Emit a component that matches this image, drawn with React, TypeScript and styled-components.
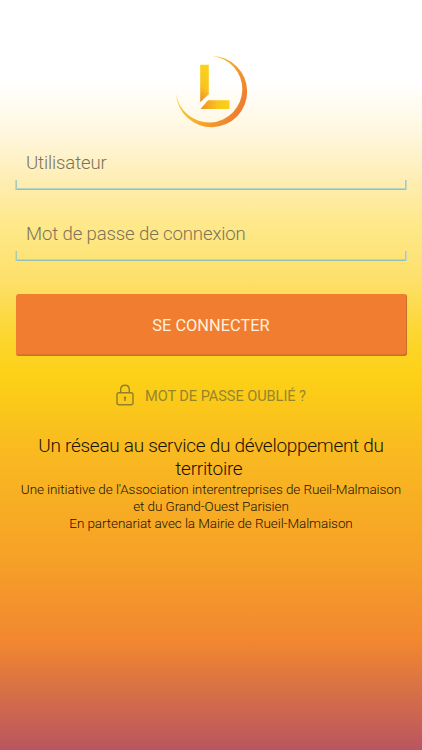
import React from "react";
import styled, { createGlobalStyle } from "styled-components";

const GlobalStyle = createGlobalStyle`
  *, *::before, *::after { box-sizing: border-box; }
  html, body { margin: 0; padding: 0; }
  body { font-family: Roboto, "Liberation Sans", sans-serif; }
`;

const Screen = styled.main`
  display: flex;
  flex-direction: column;
  align-items: stretch;
  width: 100%;
  height: 750px;
  padding: 52px 15px 0 16px;
  overflow: hidden;
  background: linear-gradient(
    180deg,
    #ffffff 0,
    #ffffff 82px,
    #fff6da 138px,
    #feedb2 182px,
    #fee88a 225px,
    #fde06a 280px,
    #fcd630 335px,
    #fcd116 376px,
    #f9ba20 450px,
    #f6a326 550px,
    #f28730 642px,
    #dc7442 682px,
    #b95560 750px
  );
`;

const Logo = styled.svg`
  display: block;
  width: 80px;
  height: 80px;
  margin-left: 155px;
`;

const Form = styled.form`
  display: flex;
  flex-direction: column;
  margin: 11px 0 0;
`;

const Field = styled.label`
  display: block;
  height: 47px;
  margin: 0 0 24px -1px;
  background:
    linear-gradient(90deg, #c3dac2 50%, #a3ccc0 50%) left bottom / 2px 10px no-repeat,
    linear-gradient(90deg, #a3ccc0 50%, #c3dac2 50%) right bottom / 2px 10px no-repeat,
    linear-gradient(#b4d6c6 50%, #90c2b8 50%) left bottom / 100% 2px no-repeat;
`;

const Input = styled.input`
  display: block;
  width: 100%;
  height: 40px;
  padding: 0 11px;
  border: 0;
  outline: 0;
  background: transparent;
  font: 300 18.6px Roboto, sans-serif;
  letter-spacing: -0.14px;
  color: #333;
  &::placeholder { color: #7d735a; opacity: 1; }
`;

const SubmitButton = styled.button`
  height: 62px;
  margin: 9px 0 0;
  padding: 0 1px 0 0;
  border: 0;
  border-radius: 3px;
  background: #f17e30;
  box-shadow: inset -1px -1.5px 0 #cb6f22;
  color: #fff0de;
  font: 400 16.4px Roboto, sans-serif;
`;

const ForgotLink = styled.a`
  display: flex;
  align-items: center;
  height: 24px;
  margin: 28px 0 0 99px;
  gap: 10px;
  color: #96862b;
  font-size: 14.6px;
  font-weight: 400;
  letter-spacing: -0.07px;
  white-space: nowrap;
`;

const LockIcon = styled.svg`
  display: block;
  flex: none;
  width: 20px;
  height: 24px;
  margin-top: -2px;
`;

const About = styled.section`
  margin: 27px 0 0 -1px;
  text-align: center;
  color: #1c1302;
  font-weight: 300;
  white-space: nowrap;
`;

const Headline = styled.h1`
  margin: 0 0 1px;
  font-size: 19px;
  line-height: 22.5px;
  font-weight: 300;
  letter-spacing: -0.28px;
`;

const Note = styled.p`
  margin: 0;
  font-size: 13.5px;
  line-height: 17.2px;
  letter-spacing: -0.08px;
`;

export default function App() {
  return (
    <>
      <GlobalStyle />
      <Screen>
        <Logo viewBox="0 0 80 80" aria-label="Logo">
          <defs>
            <linearGradient id="ring" x1="0" y1="0.3" x2="0.9" y2="0.75">
              <stop offset="0" stopColor="#fbd126" />
              <stop offset="0.45" stopColor="#f8b529" />
              <stop offset="1" stopColor="#ef7e30" />
            </linearGradient>
            <linearGradient id="stem" x1="0.6" y1="0" x2="0.4" y2="1">
              <stop offset="0" stopColor="#fbd31b" />
              <stop offset="0.6" stopColor="#f9c41d" />
              <stop offset="1" stopColor="#ef932b" />
            </linearGradient>
            <linearGradient id="foot" x1="0" y1="0" x2="1" y2="0">
              <stop offset="0" stopColor="#f08f2a" />
              <stop offset="0.6" stopColor="#fac61c" />
              <stop offset="1" stopColor="#fbd01b" />
            </linearGradient>
          </defs>
          <path
            d="M41 4 A35.600 35.600 0 1 1 5 41.500 A33.300 33.300 0 1 0 41 4 Z"
            fill="url(#ring)"
          />
          <path d="M29.200 12.700 H37.800 V42.200 L29.200 50.300 Z" fill="url(#stem)" />
          <path d="M37 48.300 H58.500 V57 H29.500 Z" fill="url(#foot)" />
        </Logo>
        <Form onSubmit={(event) => event.preventDefault()}>
          <Field>
            <Input type="text" placeholder="Utilisateur" />
          </Field>
          <Field>
            <Input type="password" placeholder="Mot de passe de connexion" />
          </Field>
          <SubmitButton type="submit">SE CONNECTER</SubmitButton>
        </Form>
        <ForgotLink>
          <LockIcon viewBox="0 0 20 24" fill="none" stroke="#8f8029" strokeWidth="1.4">
            <rect x="2" y="9.800" width="16" height="12" rx="2" />
            <path d="M5.700 9.800 V6.500 C5.700 0.800 14.300 0.800 14.300 6.500 V9.800" />
            <circle cx="10" cy="14.600" r="1.200" fill="#8f8029" stroke="none" />
            <path d="M10 14.500 V18" />
          </LockIcon>
          MOT DE PASSE OUBLIÉ ?
        </ForgotLink>
        <About>
          <Headline>
            Un réseau au service du développement du
            <br />
            territoire{"\u00a0"}
          </Headline>
          <Note>
            Une initiative de l'Association interentreprises de Rueil-Malmaison
            <br />
            et du Grand-Ouest Parisien
            <br />
            En partenariat avec la Mairie de Rueil-Malmaison
          </Note>
        </About>
      </Screen>
    </>
  );
}
